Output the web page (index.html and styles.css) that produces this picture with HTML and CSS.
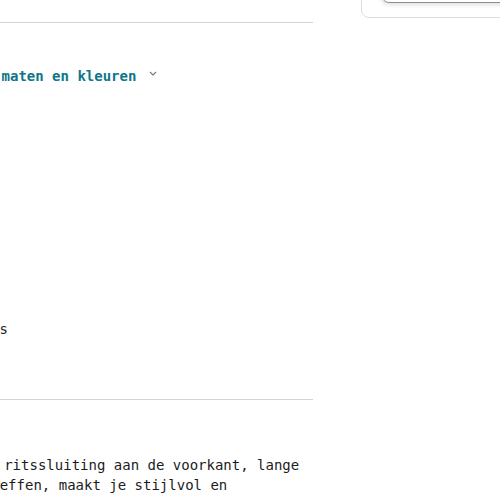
FILE: index.html
```html
<!DOCTYPE html>
<html lang="nl">
<head>
<meta charset="utf-8">
<title>Product</title>
<link rel="stylesheet" href="styles.css">
</head>
<body>
<div class="page">
  <main class="main">
    <div class="top-section"></div>
    <div class="link-row">
      <button class="toggle">
        <span class="toggle-label">Alle maten en kleuren</span>
        <svg class="chev" width="8" height="5" viewBox="0 0 8 5" aria-hidden="true"><path d="M1 1 L4 4 L7 1" fill="none" stroke="#777" stroke-width="1.1"/></svg>
      </button>
    </div>
    <div class="info-row">Gratis retours</div>
    <div class="divider"></div>
    <p class="desc">Deze zwarte jas met een ritssluiting aan de voorkant, lange mouwen en een design in effen, maakt je stijlvol en comfortabel af.</p>
  </main>
  <aside class="side">
    <div class="card">
      <div class="card-inner"></div>
    </div>
  </aside>
</div>
</body>
</html>
```
FILE: styles.css
```css
html, body {
  margin: 0;
  padding: 0;
  background: #fff;
  overflow: hidden;
  width: 500px;
  height: 500px;
}
.page {
  display: flex;
  align-items: flex-start;
  gap: 48px;
  font-family: "DejaVu Sans Mono", "Liberation Mono", monospace;
  font-size: 14px;
  color: #1c1c1c;
}
.main {
  flex: 0 0 515.6px;
  margin-left: -202.6px;
}
.top-section {
  height: 22px;
  border-bottom: 1px solid #d3d3d3;
}
.link-row {
  margin-top: 43px;
  line-height: 20px;
  padding-left: 162px;
}
.toggle {
  display: inline-flex;
  align-items: center;
  gap: 13px;
  border: 0;
  background: none;
  padding: 0;
  font: inherit;
  line-height: 20px;
  color: #0d7686;
  font-weight: bold;
}
.chev {
  margin-top: -5px;
}
.info-row {
  margin-top: 233px;
  line-height: 20px;
  padding-left: 92.5px;
}
.divider {
  margin-top: 60px;
  border-top: 1px solid #d3d3d3;
}
.desc {
  margin: 55px 0 0;
  line-height: 20px;
  text-indent: 4.5px;
}
.side {
  flex: 1 0 200px;
}
.card {
  margin-top: -60px;
  border: 1px solid #dedede;
  border-radius: 8px;
  padding: 0 0 14px 19px;
}
.card-inner {
  height: 60px;
  border: 1px solid #8f8f8f;
  border-radius: 8px;
  box-shadow: 0 2px 4px rgba(0,0,0,0.12);
}
```
